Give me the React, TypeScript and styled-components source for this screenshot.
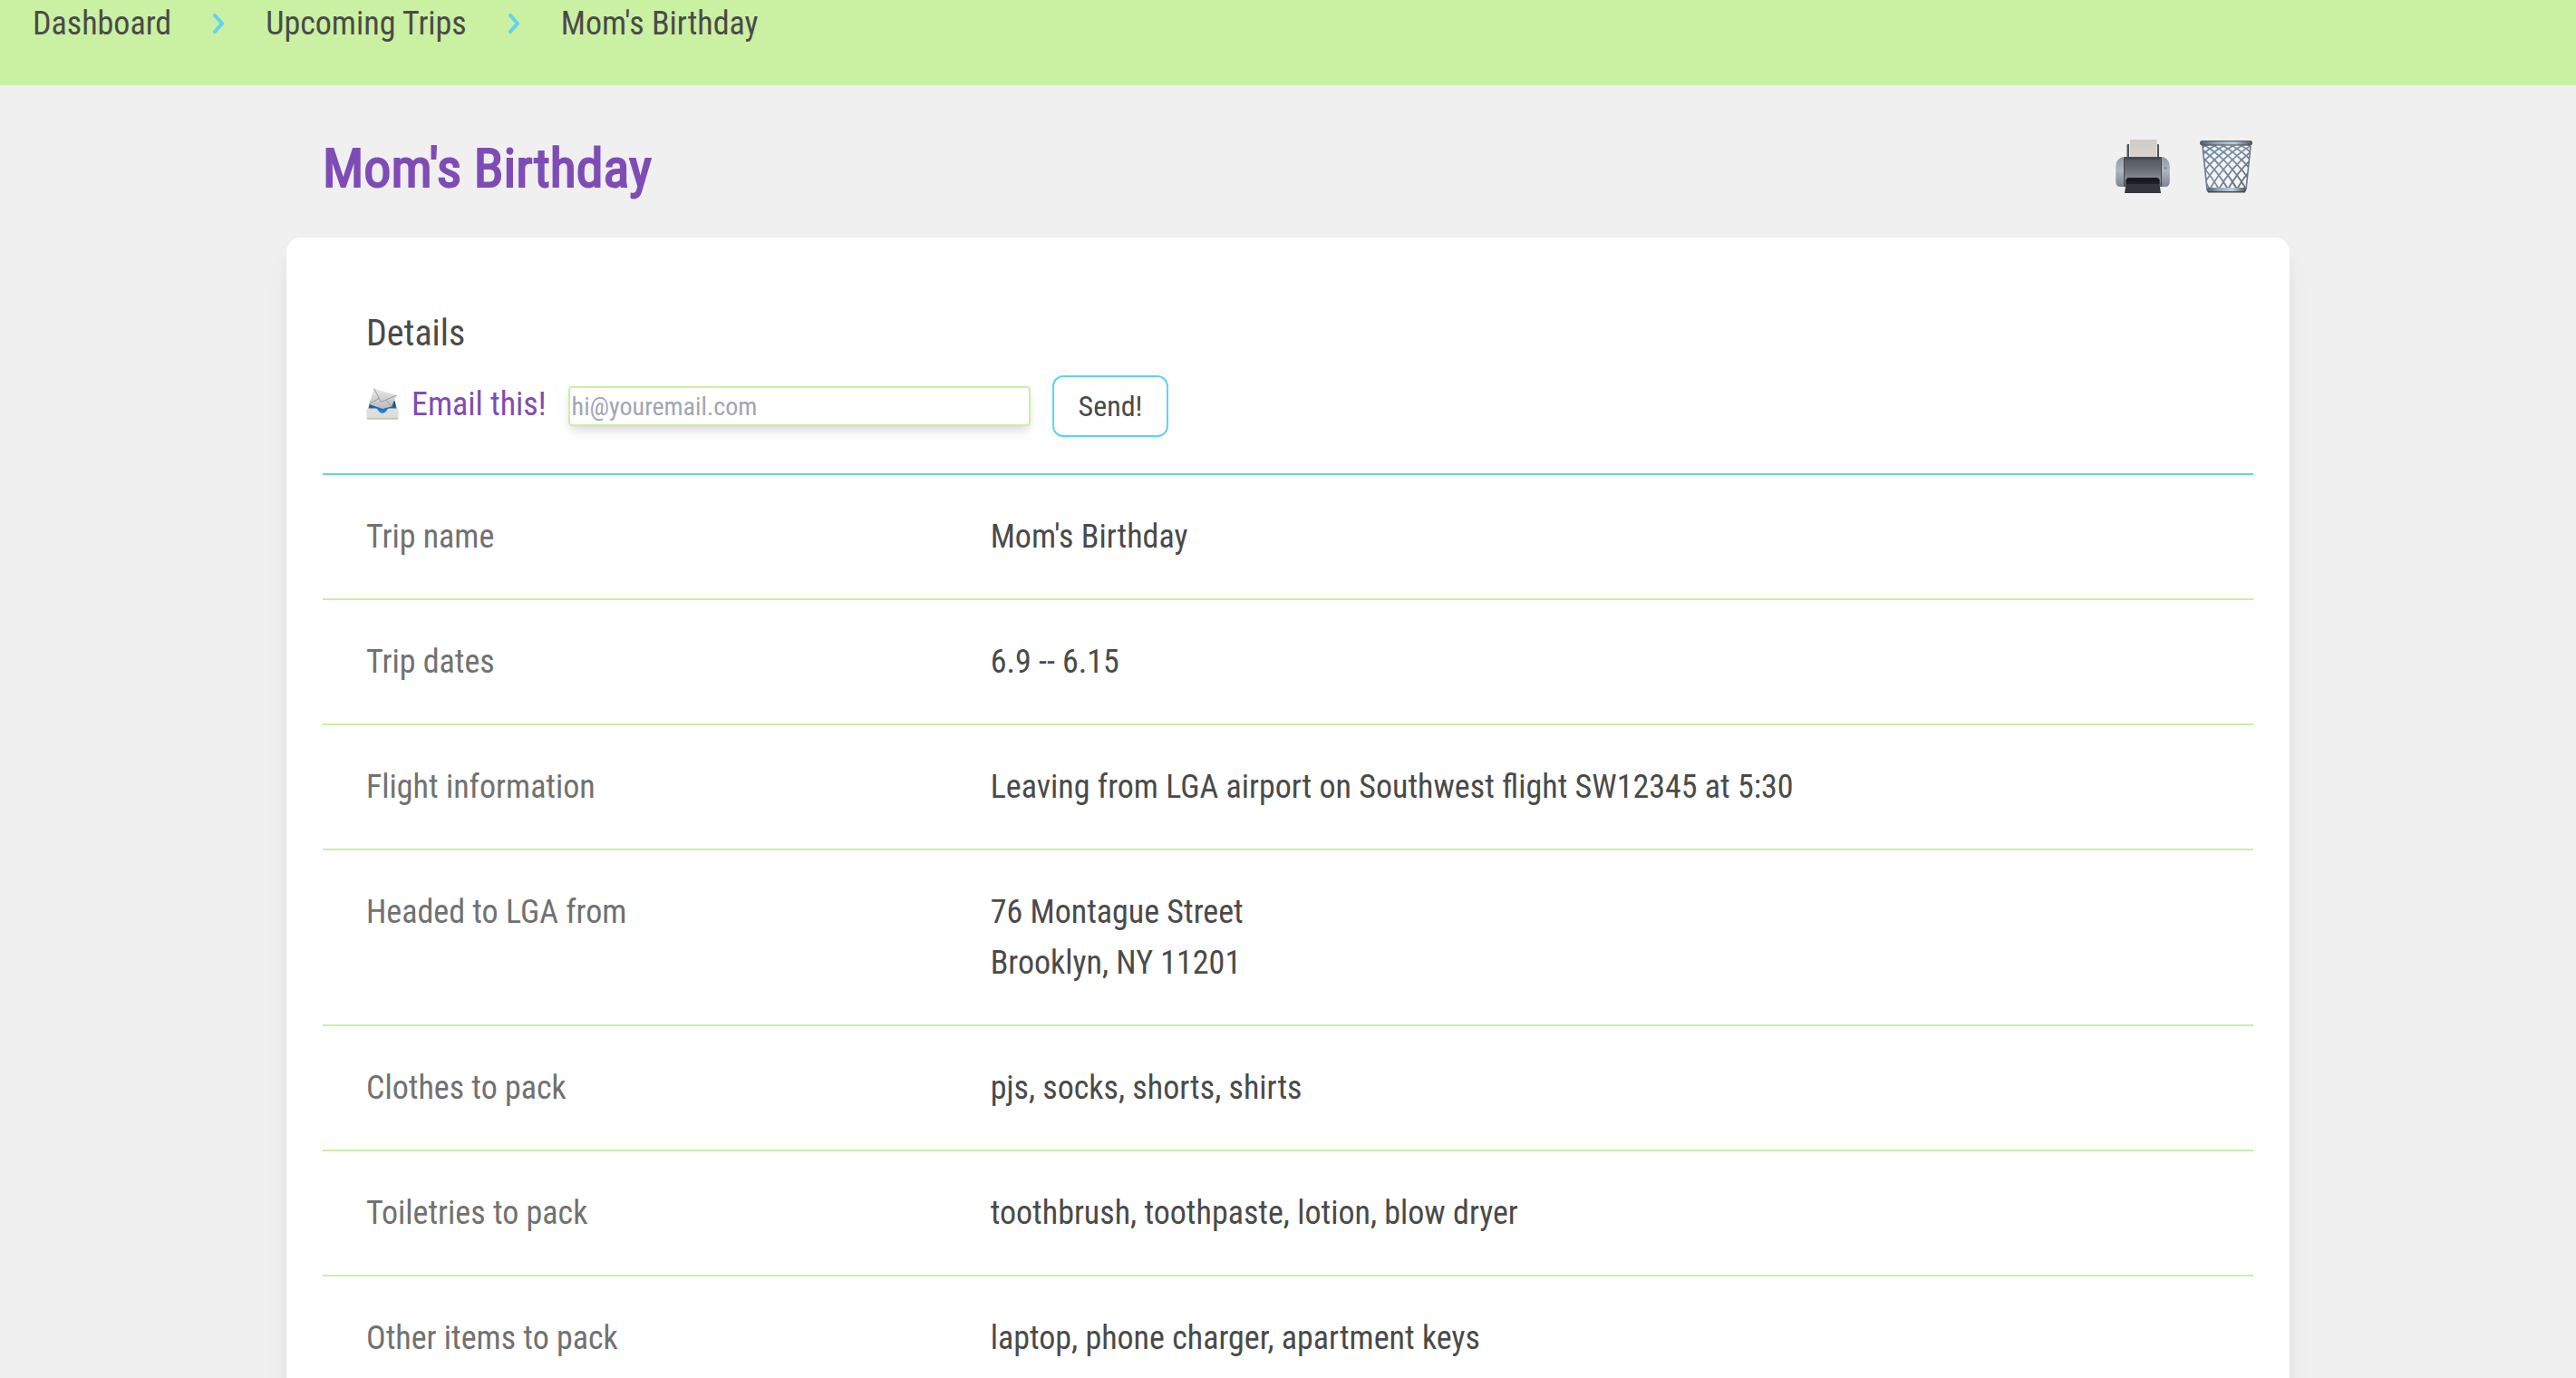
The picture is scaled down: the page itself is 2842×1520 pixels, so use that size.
import React from 'react';
import styled, { createGlobalStyle } from 'styled-components';

const color = {
  page: '#f0f0f0',
  lime: '#caf0a2',
  sky: '#5fd3f3',
  purple: '#7f4cb6',
  ink: '#4a4a4a',
  muted: '#717171',
  placeholder: '#a0a6b1',
};

const GlobalStyle = createGlobalStyle`
  *, *::before, *::after { box-sizing: border-box; }
  body {
    margin: 0;
    background: ${color.page};
    color: ${color.ink};
    font-family: "Roboto Condensed", Roboto, "Liberation Sans", sans-serif;
    font-size: 36px;
    line-height: 56px;
  }
`;

const Page = styled.div`
  height: 100vh;
  overflow: hidden auto;
  scrollbar-width: none;
`;

const TopBar = styled.nav`
  padding: 0 36px 42px;
  background: ${color.lime};
`;

const Crumbs = styled.ol`
  display: flex;
  align-items: center;
  gap: 46px;
  margin: 0;
  padding: 0;
  list-style: none;
  line-height: 52px;
`;

const Crumb = styled.li`
  display: flex;
  align-items: center;
  gap: 46px;
`;

const CrumbLink = styled.a`
  color: inherit;
  text-decoration: none;
`;

const Main = styled.main`
  width: 78%;
  max-width: 2210px;
  margin: 0 auto;
`;

const TitleRow = styled.header`
  display: flex;
  align-items: center;
  justify-content: space-between;
  padding: 50px 40px 38px;
`;

const Title = styled.h1`
  margin: 0;
  padding-top: 4px;
  color: ${color.purple};
  font-size: 60px;
  font-weight: 400;
  line-height: 76px;
  -webkit-text-stroke: 2px ${color.purple};
`;

const Actions = styled.div`
  display: flex;
  gap: 32px;
`;

const IconButton = styled.button`
  display: flex;
  padding: 0;
  border: 0;
  background: none;
  cursor: pointer;
`;

const Card = styled.section`
  padding: 74px 40px 40px;
  background: #fff;
  border-radius: 16px;
  box-shadow: 0 20px 30px -6px rgba(0, 0, 0, 0.1), 0 8px 12px -4px rgba(0, 0, 0, 0.05);
`;

const CardHeader = styled.div`
  padding: 0 48px 40px;
  border-bottom: 2px solid ${color.sky};
`;

const CardTitle = styled.h2`
  margin: 0 0 14px;
  font-size: 40px;
  font-weight: 400;
  line-height: 64px;
`;

const EmailForm = styled.form`
  display: flex;
  align-items: center;
  gap: 24px;
`;

const EmailLabel = styled.label`
  display: flex;
  align-items: center;
  gap: 14px;
  padding-bottom: 4px;
  color: ${color.purple};
`;

const EmailInput = styled.input`
  width: 510px;
  height: 44px;
  padding: 0 2px;
  border: 2px solid ${color.lime};
  border-radius: 4px;
  background: #fff;
  color: ${color.ink};
  font: inherit;
  font-size: 28px;
  line-height: 40px;
  box-shadow: 0 8px 12px -2px rgba(0, 0, 0, 0.1), 0 4px 8px -2px rgba(0, 0, 0, 0.06);

  &::placeholder {
    color: ${color.placeholder};
    opacity: 1;
  }
`;

const SendButton = styled.button`
  padding: 8px 27px;
  border: 2px solid ${color.sky};
  border-radius: 12px;
  background: #fff;
  color: ${color.ink};
  font: inherit;
  font-size: 32px;
  line-height: 48px;
  cursor: pointer;
`;

const DetailList = styled.dl`
  margin: 0;
`;

const DetailRow = styled.div`
  display: grid;
  grid-template-columns: repeat(3, 1fr);
  column-gap: 32px;
  padding: 40px 48px;

  & + & {
    border-top: 2px solid ${color.lime};
  }
`;

const Term = styled.dt`
  color: ${color.muted};
`;

const Value = styled.dd`
  grid-column: span 2;
  margin: 0;
  white-space: pre-line;
`;

const Chevron = () => (
  <svg width="12" height="22" viewBox="0 0 12 22" fill="none" aria-hidden="true">
    <path d="M2 2 10 11 2 20" stroke={color.sky} strokeWidth="4" strokeLinecap="round" strokeLinejoin="round" />
  </svg>
);

const PrinterIcon = () => (
  <svg width="60" height="60" viewBox="0 0 60 60" aria-hidden="true">
    <defs>
      <linearGradient id="printerSide" x1="0" y1="0" x2="0" y2="1">
        <stop offset="0" stopColor="#8f98a1" />
        <stop offset="0.45" stopColor="#aeb7bf" />
        <stop offset="1" stopColor="#7d868f" />
      </linearGradient>
      <linearGradient id="printerBody" x1="0" y1="0" x2="0" y2="1">
        <stop offset="0" stopColor="#4e545b" />
        <stop offset="0.4" stopColor="#666d75" />
        <stop offset="0.75" stopColor="#858c94" />
        <stop offset="1" stopColor="#5d636b" />
      </linearGradient>
      <linearGradient id="printerPaper" x1="0" y1="0" x2="0" y2="1">
        <stop offset="0" stopColor="#cfcbc5" />
        <stop offset="1" stopColor="#d9d5cf" />
      </linearGradient>
    </defs>
    <rect x="12.5" y="5" width="35.5" height="16" rx="1" fill="#51565e" />
    <rect x="15" y="0" width="31" height="20" fill={color.page} />
    <rect x="16" y="0" width="29.5" height="20" fill="url(#printerPaper)" />
    <path d="M10 19C4 19 .6 23 .2 30v15c0 4 1 7 4.400 7H12V19Z" fill="url(#printerSide)" />
    <path d="M50 19c6 0 9.400 4 9.800 11v15c0 4-1 7-4.400 7H48V19Z" fill="url(#printerSide)" />
    <path d="M9.500 19h41v33h-41Z" fill="url(#printerBody)" />
    <path d="M10 19h40l.5 3H9.500Z" fill="#454b52" />
    <path d="M9.500 20v32M50.500 20v32" stroke="#3f454c" strokeWidth="1" />
    <path d="M11.500 47c-1-3 1-5 4-5h29c3 0 5 2 4 5l-2 3H14Z" fill="#17191c" />
    <path d="M12 46h36l2 13H10Z" fill="#33373c" />
    <path d="M12 46h36l.5 3h-37Z" fill="#1d2023" />
    <circle cx="55" cy="31.5" r="1.600" fill="#6f8fb5" />
  </svg>
);

const meshStarts = Array.from({ length: 11 }, (_, i) => -36 + i * 10);

const TrashIcon = () => (
  <svg width="60" height="60" viewBox="0 0 60 60" fill="none" aria-hidden="true">
    <defs>
      <linearGradient id="rim" x1="0" y1="0" x2="1" y2="0">
        <stop offset="0" stopColor="#53585f" />
        <stop offset="0.3" stopColor="#8fa6bc" />
        <stop offset="0.65" stopColor="#bcd0e0" />
        <stop offset="1" stopColor="#4d5157" />
      </linearGradient>
      <linearGradient id="wire" gradientUnits="userSpaceOnUse" x1="0" y1="0" x2="60" y2="60">
        <stop offset="0" stopColor="#6685a6" />
        <stop offset="0.5" stopColor="#7f8f9f" />
        <stop offset="1" stopColor="#55585e" />
      </linearGradient>
      <clipPath id="basket">
        <path d="M4 6h53l-5 50H9Z" />
      </clipPath>
    </defs>
    <path d="M4 6h53l-5 50H9Z" fill="#f3f5f7" />
    <g clipPath="url(#basket)" strokeWidth="1.8" stroke="url(#wire)">
      {meshStarts.map((x) => (
        <path key={`d${x}`} d={`M${x} 5Q${x + 30} 22 ${x + 50} 58`} />
      ))}
      {meshStarts.map((x) => (
        <path key={`u${x}`} d={`M${x + 36} 5Q${x + 6} 22 ${x - 14} 58`} />
      ))}
    </g>
    <path d="M4 7 9 55M57 7 52 55" stroke="#68798b" strokeWidth="1.6" />
    <rect x="8.5" y="53" width="43.5" height="5" rx="2.5" fill="url(#rim)" />
    <path d="M10 57.800h41" stroke="#4e4b4a" strokeWidth="1.6" />
    <rect x="1" y="1" width="58" height="5.5" rx="2.7" fill="url(#rim)" />
    <path d="M3 1.600h54" stroke="#5a6470" strokeWidth="1.2" />
    <path d="M3 6h54" stroke="#55504d" strokeWidth="1.2" />
  </svg>
);

const InboxIcon = () => (
  <svg width="36" height="36" viewBox="0 0 36 36" aria-hidden="true">
    <defs>
      <linearGradient id="letter" x1="0" y1="0" x2="0" y2="1">
        <stop offset="0" stopColor="#e9e9ea" />
        <stop offset="1" stopColor="#b9babd" />
      </linearGradient>
      <linearGradient id="trayBack" x1="0" y1="0" x2="0" y2="1">
        <stop offset="0" stopColor="#123f70" />
        <stop offset="1" stopColor="#1f74c0" />
      </linearGradient>
    </defs>
    <path d="M4.500 14h27L34 24H2Z" fill="url(#trayBack)" />
    <path d="M8.500.5 33.500 8 28 20.500 18 23 3.500 18Z" fill="url(#letter)" />
    <path d="M8.500.5 16.500 15.500 33.500 8M3.500 18l11-7M28 20.500 22 13" fill="none" stroke="#98999d" strokeWidth="1" />
    <path d="M11 22.500c5 1.500 9 1.500 14 0l-1 3c-1 2-3 3-6 3s-5-1-6-3Z" fill="#1f7fd6" />
    <path d="M2 22.500h8.500c1.500 0 2 .8 2.600 2 1 2 2.600 3.200 4.900 3.200s3.900-1.200 4.900-3.200c.6-1.200 1.100-2 2.600-2H34c1 0 1.500.5 1.500 1.500v9c0 1-.5 1.700-1.500 1.700H2c-1 0-1.500-.7-1.500-1.700v-9c0-1 .5-1.500 1.500-1.500Z" fill="#dfded9" />
    <path d="M1 33.600h34" stroke="#c3c1bb" strokeWidth="1.6" />
  </svg>
);

const crumbs = ['Dashboard', 'Upcoming Trips', "Mom's Birthday"];

const details = [
  { term: 'Trip name', value: "Mom's Birthday" },
  { term: 'Trip dates', value: '6.9 -- 6.15' },
  { term: 'Flight information', value: 'Leaving from LGA airport on Southwest flight SW12345 at 5:30' },
  { term: 'Headed to LGA from', value: '76 Montague Street\nBrooklyn, NY 11201' },
  { term: 'Clothes to pack', value: 'pjs, socks, shorts, shirts' },
  { term: 'Toiletries to pack', value: 'toothbrush, toothpaste, lotion, blow dryer' },
  { term: 'Other items to pack', value: 'laptop, phone charger, apartment keys' },
];

export default function App() {
  return (
    <Page>
      <GlobalStyle />
      <TopBar aria-label="Breadcrumb">
        <Crumbs>
          {crumbs.map((name, i) => (
            <Crumb key={name}>
              {i > 0 && <Chevron />}
              <CrumbLink href="#">{name}</CrumbLink>
            </Crumb>
          ))}
        </Crumbs>
      </TopBar>
      <Main>
        <TitleRow>
          <Title>Mom's Birthday</Title>
          <Actions>
            <IconButton type="button" aria-label="Print trip">
              <PrinterIcon />
            </IconButton>
            <IconButton type="button" aria-label="Delete trip">
              <TrashIcon />
            </IconButton>
          </Actions>
        </TitleRow>
        <Card>
          <CardHeader>
            <CardTitle>Details</CardTitle>
            <EmailForm onSubmit={(e) => e.preventDefault()}>
              <EmailLabel htmlFor="email">
                <InboxIcon />
                Email this!
              </EmailLabel>
              <EmailInput id="email" type="email" placeholder="hi@youremail.com" />
              <SendButton type="submit">Send!</SendButton>
            </EmailForm>
          </CardHeader>
          <DetailList>
            {details.map(({ term, value }) => (
              <DetailRow key={term}>
                <Term>{term}</Term>
                <Value>{value}</Value>
              </DetailRow>
            ))}
          </DetailList>
        </Card>
      </Main>
    </Page>
  );
}
